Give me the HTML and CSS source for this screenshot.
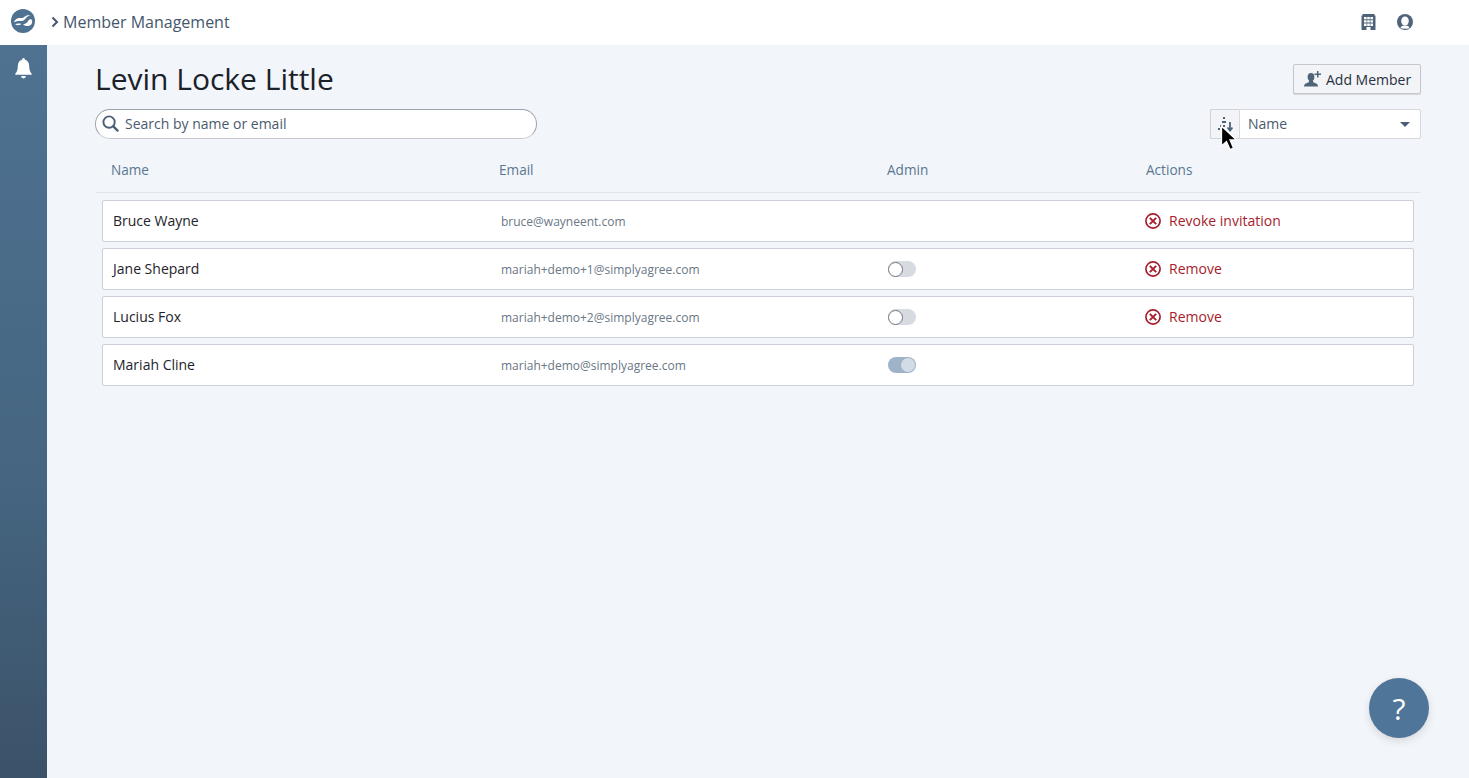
FILE: index.html
```html
<!DOCTYPE html>
<html lang="en">
<head>
<meta charset="utf-8">
<title>Member Management</title>
<link rel="stylesheet" href="styles.css">
</head>
<body>
<header class="topbar">
  <div class="crumbs">
    <svg class="logo" viewBox="0 0 24 24" width="24" height="24"><circle cx="12" cy="12" r="12" fill="#4f7292"/><path d="M2.800 13.500c.8-3 3.700-5 7-4.500 2 .3 3-.5 4.200-1.500 1.500-1.200 4-1.700 6-.7-2 0-4 .6-5 2.200-1.200 2-3 3.200-5.200 3.100-2.500-.1-5 .3-7 1.400z" fill="#fff"/><path d="M4 15.200c2-.8 4.300-.7 6.500-.2-1.700 1.500-4.500 1.500-6.500.2z" fill="#fff"/><path d="M12 15.200c2.200-.2 4-1.200 5-3 .8-1.400 2-2.200 3.500-1.700 1.100 1.500.9 3.800-.5 5.200-2 1.800-6 1.800-8-.5z" fill="#fff"/></svg>
    <svg class="chev" viewBox="0 0 8 12" width="8" height="12"><path d="M1.500 1.500 6 6l-4.500 4.500" fill="none" stroke="#44566c" stroke-width="2"/></svg>
    <span class="crumb-text">Member Management</span>
  </div>
  <div class="top-icons">
    <svg viewBox="0 0 14 16" width="15" height="16"><path fill-rule="evenodd" d="M1 0h12v1.500h1V16H0V1.500h1zM2.500 3v2.300h2.600V3zm3.200 0v2.300h2.600V3zm3.200 0v2.300h2.600V3zM2.500 6.300v2.300h2.600V6.300zm3.200 0v2.300h2.600V6.300zm3.200 0v2.300h2.600V6.300zM2.500 9.600v2.300h2.600V9.600zm3.200 0v2.300h2.600V9.600zm3.200 0v2.300h2.600V9.600zM5 13v3h4v-3z" fill="#4f6478"/></svg>
    <svg viewBox="0 0 16 16" width="16" height="16"><circle cx="8" cy="8" r="8" fill="#4f6478"/><ellipse cx="8" cy="7" rx="3.800" ry="4.600" fill="#fff"/><path d="M3.500 14c.6-1.800 2-2.500 4.500-2.500s3.900.7 4.500 2.500A6.500 6.500 0 0 1 8 14.500 6.500 6.500 0 0 1 3.500 14z" fill="#fff"/></svg>
  </div>
</header>
<div class="shell">
  <aside class="sidebar">
    <svg viewBox="0 0 18 22" width="17" height="21"><path d="M9 0a1.500 1.500 0 0 1 1.500 1.700C13.500 2.400 15 5 15 8c0 4 .8 6.500 2.700 8.500v1H.3v-1C2.200 14.500 3 12 3 8c0-3 1.500-5.600 4.500-6.300A1.500 1.500 0 0 1 9 0z" fill="#fff"/><path d="M6.500 19h5a2.500 2.500 0 0 1-5 0z" fill="#fff"/></svg>
  </aside>
  <main class="content">
    <div class="title-row">
      <h1>Levin Locke Little</h1>
      <button class="add-btn">
        <svg viewBox="0 0 18 16" width="18" height="16"><ellipse cx="7" cy="6" rx="3.400" ry="4" fill="#4f6478"/><path d="M0 15.500c0-2.500 2-3.300 4.700-4.200L5.500 8h3l.8 3.300c2.700.9 4.700 1.700 4.700 4.200z" fill="#4f6478"/><path d="M13 0h1.500v2.500H17V4h-2.500v2.500H13V4h-2.500V2.500H13z" fill="#4f6478"/></svg>
        Add Member
      </button>
    </div>
    <div class="filter-row">
      <label class="search">
        <svg viewBox="0 0 18 18" width="17" height="17"><circle cx="7.500" cy="7.500" r="6" fill="none" stroke="#4a5f76" stroke-width="2"/><path d="M12 12l4.500 4.500" stroke="#4a5f76" stroke-width="2.400" stroke-linecap="round"/></svg>
        <span>Search by name or email</span>
      </label>
      <div class="sort">
        <div class="sort-btn">
          <svg viewBox="0 0 16 16" width="16" height="16"><g fill="#4f6478"><rect x="6" y="1" width="2" height="2"/><rect x="5" y="5" width="4" height="2"/><rect x="3" y="9" width="2" height="2"/><rect x="6" y="9" width="2" height="2"/><rect x="1" y="12" width="2" height="2"/></g><path d="M13 6v8M10.500 11.500 13 14.500l2.500-3" fill="none" stroke="#4f6478" stroke-width="1.800"/></svg>
        </div>
        <div class="sort-select"><span>Name</span><i class="caret"></i></div>
      </div>
    </div>
    <div class="table-head">
      <span>Name</span><span>Email</span><span>Admin</span><span>Actions</span>
    </div>
    <div class="rows">
      <div class="row">
        <span class="name">Bruce Wayne</span><span class="email">bruce@wayneent.com</span><span></span>
        <a class="action"><svg viewBox="0 0 16 16" width="16" height="16"><circle cx="8" cy="8" r="7.100" fill="none" stroke="#a81c2c" stroke-width="1.700"/><path d="M4.800 4.800l6.400 6.400M11.200 4.800l-6.400 6.400" stroke="#a81c2c" stroke-width="1.900"/></svg>Revoke invitation</a>
      </div>
      <div class="row">
        <span class="name">Jane Shepard</span><span class="email">mariah+demo+1@simplyagree.com</span><span class="toggle"><i></i></span>
        <a class="action"><svg viewBox="0 0 16 16" width="16" height="16"><circle cx="8" cy="8" r="7.100" fill="none" stroke="#a81c2c" stroke-width="1.700"/><path d="M4.800 4.800l6.400 6.400M11.200 4.800l-6.400 6.400" stroke="#a81c2c" stroke-width="1.900"/></svg>Remove</a>
      </div>
      <div class="row">
        <span class="name">Lucius Fox</span><span class="email">mariah+demo+2@simplyagree.com</span><span class="toggle"><i></i></span>
        <a class="action"><svg viewBox="0 0 16 16" width="16" height="16"><circle cx="8" cy="8" r="7.100" fill="none" stroke="#a81c2c" stroke-width="1.700"/><path d="M4.800 4.800l6.400 6.400M11.200 4.800l-6.400 6.400" stroke="#a81c2c" stroke-width="1.900"/></svg>Remove</a>
      </div>
      <div class="row">
        <span class="name">Mariah Cline</span><span class="email">mariah+demo@simplyagree.com</span><span class="toggle on"><i></i></span>
        <span></span>
      </div>
    </div>
  </main>
</div>
<div class="help">?</div>
<svg class="cursor" viewBox="0 0 18 28" width="18" height="28"><path d="M1.500 1v20l5-4.500 3.500 8 3.500-1.500-3.500-8h6.500z" fill="#000" stroke="#fff" stroke-width="1.300"/></svg>
</body>
</html>
```

FILE: styles.css
```css
* { box-sizing: border-box; }
html, body { margin: 0; height: 100%; }
body {
  font-family: "Open Sans", "Liberation Sans", sans-serif;
  background: #f2f5fa;
  color: #1d232b;
  overflow: hidden;
  display: flex;
  flex-direction: column;
}
.topbar {
  height: 45px;
  flex: none;
  background: #fff;
  display: flex;
  align-items: center;
  justify-content: space-between;
  padding: 0 56px 1px 11px;
}
.logo { margin-top: -2px; }
.crumbs { display: flex; align-items: center; }
.chev { margin-left: 16px; }
.crumb-text { margin-left: 4px; font-size: 16px; line-height: 22px; color: #44566c; }
.top-icons { display: flex; align-items: center; gap: 21px; }
.shell { flex: 1; display: flex; min-height: 0; }
.sidebar {
  width: 47px;
  flex: none;
  background: linear-gradient(180deg, #4f7292 0%, #456580 60%, #3b5269 100%);
  display: flex;
  justify-content: center;
  align-items: flex-start;
  padding-top: 13px;
}
.content { flex: 1; padding: 0 48px; }
.title-row {
  display: flex;
  justify-content: space-between;
  align-items: center;
  height: 64px;
  padding-top: 4px;
}
h1 { margin: 0; font-size: 30px; font-weight: 400; line-height: 40px; color: #1b2129; }
.add-btn {
  display: flex;
  align-items: center;
  gap: 4px;
  width: 128px;
  height: 30px;
  padding: 0 0 0 10px;
  background: #f3f4f7;
  border: 1px solid #c4c8ce;
  border-radius: 2px;
  box-shadow: 0 1px 1px rgba(0,0,0,.12);
  font: 400 14px "Open Sans", sans-serif;
  color: #27313d;
}
.filter-row { display: flex; justify-content: space-between; align-items: center; height: 30px; }
.search {
  width: 442px;
  height: 30px;
  background: #fff;
  border: 1px solid #9aa3ad;
  border-bottom-color: #c6cad0;
  border-radius: 15px;
  display: flex;
  align-items: center;
  gap: 6px;
  padding: 0 0 1px 6px;
  font-size: 14px;
  color: #4a5a6c;
}
.sort { display: flex; height: 30px; width: 211px; }
.sort-btn {
  width: 29px;
  background: #f3f4f7;
  border: 1px solid #d0d3d9;
  border-right: 0;
  border-radius: 2px 0 0 2px;
  display: flex;
  align-items: center;
  justify-content: center;
}
.sort-select {
  flex: 1;
  background: #fff;
  border: 1px solid #d5d8de;
  border-radius: 0 2px 2px 0;
  display: flex;
  align-items: center;
  justify-content: space-between;
  padding: 0 10px 1px 8px;
  font-size: 14px;
  color: #4a5a6c;
}
.caret {
  width: 0;
  height: 0;
  margin-top: 1px;
  border-left: 5px solid transparent;
  border-right: 5px solid transparent;
  border-top: 5px solid #4a5f76;
}
.table-head {
  margin: 11px 1px 0;
  height: 43px;
  display: grid;
  grid-template-columns: 388px 388px 259px 1fr;
  align-items: center;
  padding-left: 15px;
  padding-bottom: 3px;
  border-bottom: 1px solid #dfe3ea;
  font-size: 13.600px;
  color: #5a7790;
}
.rows { margin: 7px 7px 0; display: flex; flex-direction: column; gap: 6px; }
.row {
  height: 42px;
  background: #fff;
  border: 1px solid #cdd0d8;
  border-radius: 2px;
  display: grid;
  grid-template-columns: 388px 387px 258px 1fr;
  align-items: center;
  padding-left: 10px;
}
.name { font-size: 14px; line-height: 18px; padding-bottom: 1px; color: #1d232b; }
.email { font-size: 12px; color: #6a7785; }
.toggle {
  width: 28px;
  height: 16px;
  border-radius: 8px;
  background: #d7dbe1;
  display: flex;
  align-items: center;
}
.toggle i {
  width: 15px;
  height: 15px;
  border-radius: 50%;
  background: #fff;
  border: 1px solid #6f7780;
}
.toggle.on { background: #9eb2c8; justify-content: flex-end; padding-right: 1px; }
.toggle.on i { background: #d3dce6; border: 0; width: 14px; height: 14px; }
.action {
  display: flex;
  align-items: center;
  gap: 8px;
  font-size: 14px;
  line-height: 18px;
  padding-bottom: 1px;
  margin-left: -1px;
  color: #a81c2c;
}
.help {
  position: absolute;
  left: 1369px;
  top: 678px;
  width: 60px;
  height: 60px;
  border-radius: 50%;
  background: #4f7698;
  box-shadow: 0 3px 8px rgba(0,0,0,.12);
  display: flex;
  align-items: center;
  justify-content: center;
  color: #fff;
  font: 400 30px "Open Sans", sans-serif;
}
.cursor { position: absolute; left: 1220px; top: 125px; }
```
